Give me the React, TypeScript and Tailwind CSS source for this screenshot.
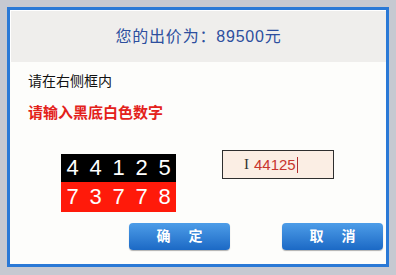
import React from "react";

const cjk = { fontFamily: '"Liberation Sans", "Noto Sans CJK SC", sans-serif' };

function Digits({ digits, bg }: { digits: string[]; bg: string }) {
  return (
    <div className={`grid grid-cols-5 ${bg}`}>
      {digits.map((d, i) => (
        <span key={i} className="flex items-center justify-center text-white text-[22px] leading-none">
          {d}
        </span>
      ))}
    </div>
  );
}

export default function App() {
  return (
    <div className="w-[396px] h-[275px] bg-[#c6c9d1] pl-[7px] pt-[7px] overflow-hidden" style={cjk}>
      <div className="w-[382px] h-[260px] border-[3px] border-[#2a79d6] bg-[#fdfdfb] flex flex-col">
        <div className="shrink-0 h-[52px] bg-[#efeeec] border-t border-l border-white flex items-center justify-center pt-[1px]">
          <span className="text-[16px] text-[#2d4f9e] tracking-[0.8px]">您的出价为：89500元</span>
        </div>
        <div className="flex flex-col pl-[18px]">
          <div className="mt-[9px] text-[14px] leading-[20px] text-[#111]">请在右侧框内</div>
          <div className="mt-[12px] text-[15px] leading-[20px] font-bold text-[#e3211a]">请输入黑底白色数字</div>
          <div className="mt-[27px] flex items-start">
            <div className="ml-[33px] mt-[4px] w-[115px] flex flex-col">
              <div className="h-[28px] bg-black grid">
                <Digits digits={["4", "4", "1", "2", "5"]} bg="bg-black" />
              </div>
              <div className="h-[30px] bg-[#ff1a0a] grid">
                <Digits digits={["7", "3", "7", "7", "8"]} bg="bg-[#ff1a0a]" />
              </div>
            </div>
            <div className="ml-[46px] w-[112px] h-[29px] border-[1.5px] border-[#2e2e2e] bg-[#fbeee4] flex items-center pl-[21px]">
              <span className="text-[#333] text-[15px] leading-none mr-[5px] font-light" style={{ fontFamily: '"Liberation Serif", serif' }}>I</span>
              <span className="text-[#c8352e] text-[15px] leading-none">44125</span>
              <span className="w-[1px] h-[16px] bg-[#b03030] ml-[1px]" />
            </div>
          </div>
          <div className="mt-[11px] ml-[101px] flex gap-[52px]">
            <button className="w-[101px] h-[27px] rounded-[4px] bg-linear-to-b from-[#4d9de8] to-[#1b69c5] shadow-[0_1px_1px_rgba(0,0,0,0.3)] flex items-center justify-center gap-[18px] text-white font-bold text-[14px]">
              <span>确</span>
              <span>定</span>
            </button>
            <button className="w-[101px] h-[27px] rounded-[4px] bg-linear-to-b from-[#4d9de8] to-[#1b69c5] shadow-[0_1px_1px_rgba(0,0,0,0.3)] flex items-center justify-center gap-[18px] text-white font-bold text-[14px]">
              <span>取</span>
              <span>消</span>
            </button>
          </div>
        </div>
      </div>
    </div>
  );
}
